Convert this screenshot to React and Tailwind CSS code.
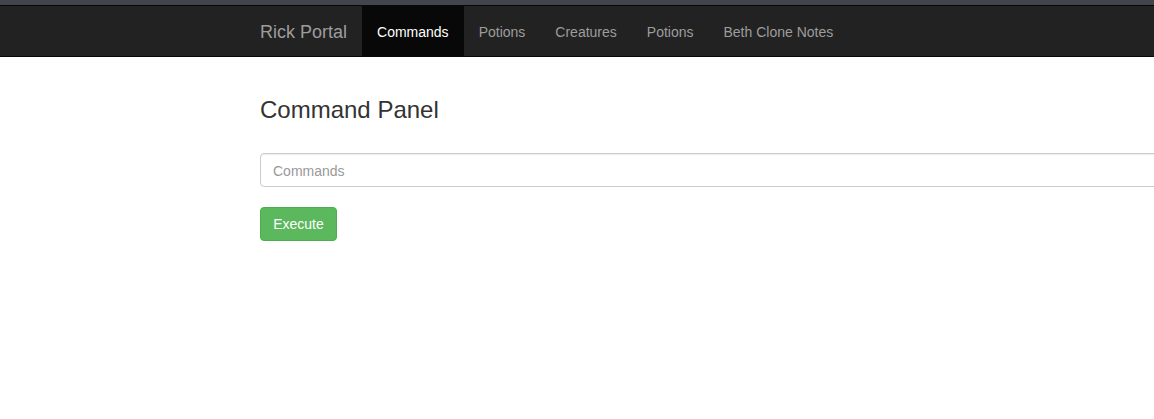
import React, { useState } from "react";

const navItems = ["Commands", "Potions", "Creatures", "Potions", "Beth Clone Notes"];

const App = () => {
  const [command, setCommand] = useState("");
  const [active] = useState(0);

  return (
    <div className="h-screen w-full overflow-hidden bg-white font-['Liberation_Sans',Arial,sans-serif] text-[14px] text-[#333]">
      {/* Top strip */}
      <div className="h-[5px] bg-[#42454c]" />

      {/* Navbar */}
      <nav className="h-[52px] border-y border-[#080808] bg-[#222]">
        <div className="flex h-[50px] items-stretch pl-[245px]">
          <a className="flex items-center px-[15px] pt-[2px] text-[18px] text-[#9d9d9d]" href="#">
            Rick Portal
          </a>
          <ul className="flex items-stretch">
            {navItems.map((item, idx) => (
              <li key={idx}>
                <a
                  href="#"
                  className={
                    idx === active
                      ? "flex h-full items-center bg-[#080808] px-[15px] pt-[2px] text-white"
                      : "flex h-full items-center px-[15px] pt-[2px] text-[#9d9d9d]"
                  }
                >
                  {item}
                </a>
              </li>
            ))}
          </ul>
        </div>
      </nav>

      {/* Content */}
      <div className="pl-[260px]">
        <h3 className="mt-[40px] mb-[30px] text-[24px] leading-[26px] font-medium text-[#333]">
          Command Panel
        </h3>
        <form onSubmit={(e) => e.preventDefault()}>
          <input
            type="text"
            value={command}
            onChange={(e) => setCommand(e.target.value)}
            placeholder="Commands"
            className="block h-[34px] w-[1140px] rounded-[4px] border border-[#ccc] px-[12px] pt-[1px] text-[14px] text-[#555] shadow-[inset_0_1px_1px_rgba(0,0,0,0.075)] outline-none placeholder-[#999]"
          />
          <button
            type="submit"
            className="mt-[20px] h-[34px] w-[77px] rounded-[4px] border border-[#4cae4c] bg-[#5cb85c] pt-[1px] text-[14px] text-white"
          >
            Execute
          </button>
        </form>
      </div>
    </div>
  );
};

export default App;
